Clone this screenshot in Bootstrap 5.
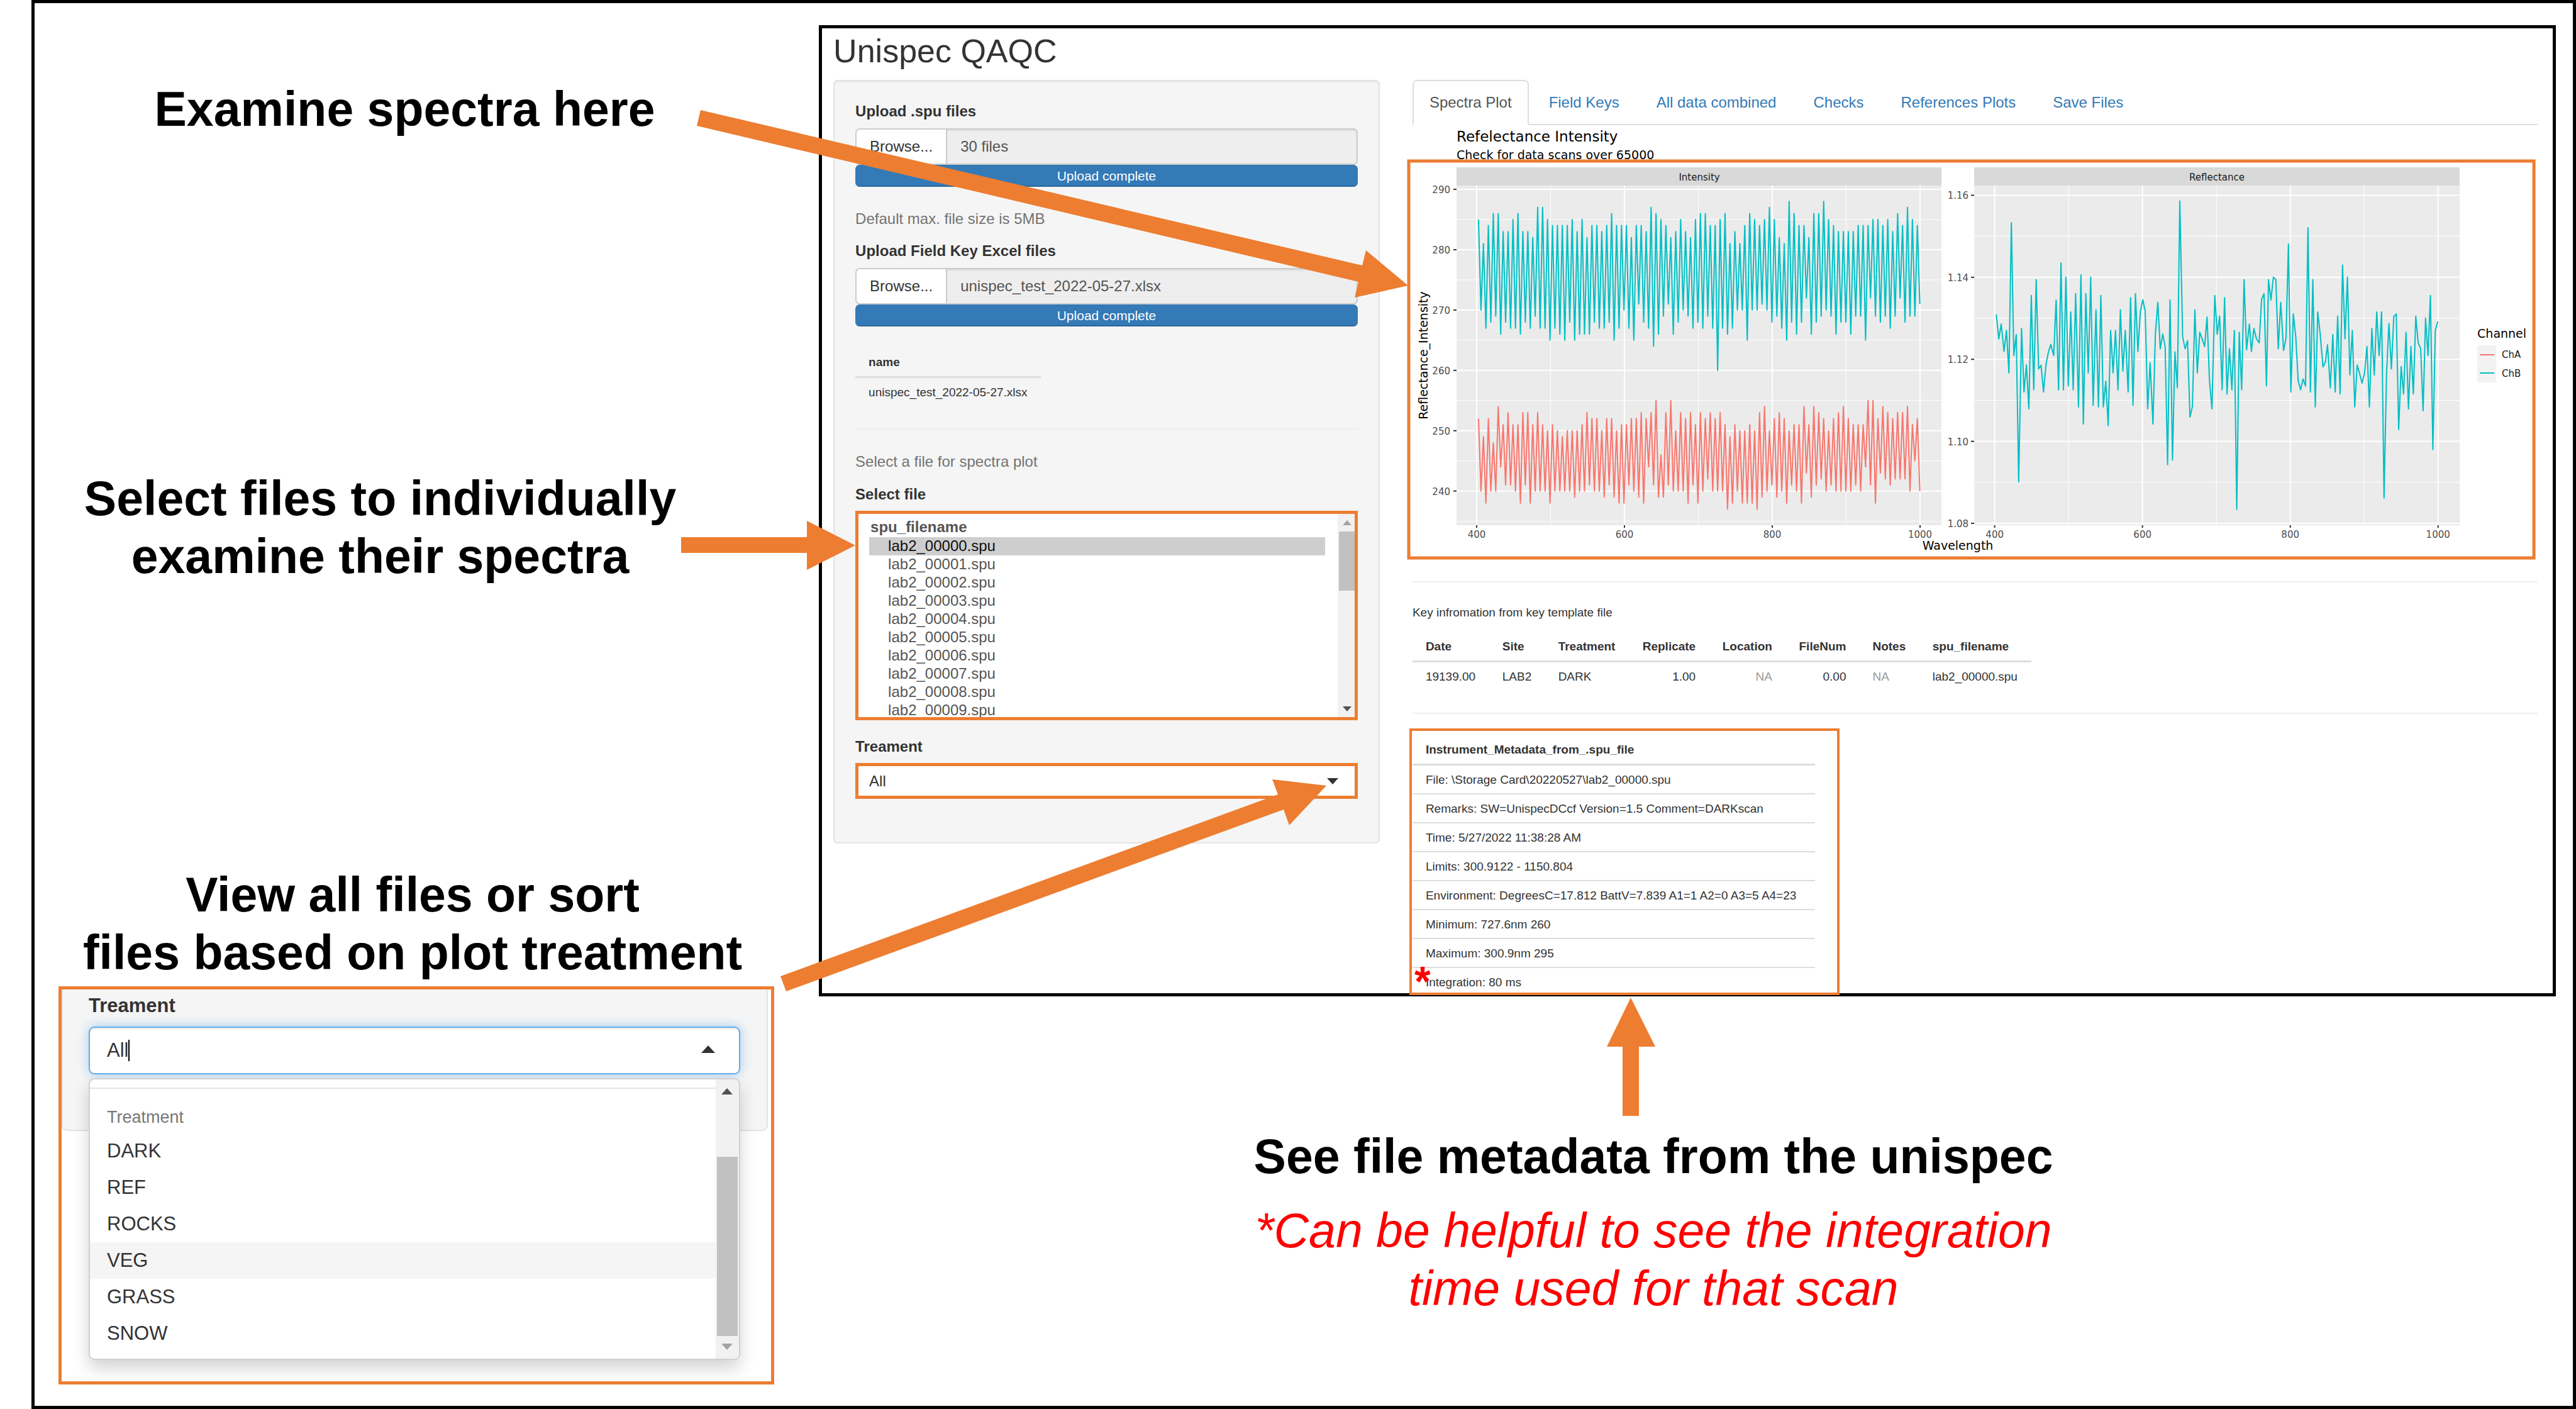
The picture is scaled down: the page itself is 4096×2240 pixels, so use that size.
<!DOCTYPE html>
<html lang="en">
<head>
<meta charset="utf-8">
<meta name="viewport" content="width=device-width, initial-scale=1">
<title>Unispec QAQC guide</title>
<link href="https://cdn.jsdelivr.net/npm/bootstrap@5.3.0/dist/css/bootstrap.min.css" rel="stylesheet">
<style>
  :root { --accent: #ed7d31; --ink: #333; --app: 24px; }
  body { font-family: "Liberation Sans", Arial, sans-serif; font-size: var(--app); line-height: 34px; color: var(--ink); background: #fff; }
  .slide { margin-left: 50px; border: 5px solid #000; min-height: 100vh; }
  .guide-col { flex: 0 0 30.9%; min-width: 0; padding-top: 122px; }
  .guide-note { font-size: 77px; line-height: 92px; font-weight: 700; color: #000; text-align: center; margin: 0; }
  .note-examine { padding-right: 70px; }
  .note-select { margin-top: 527px; padding-right: 148px; }
  .note-view { margin-top: 446px; padding-right: 45px; }
  .note-file { margin-top: 208px; padding-right: 108px; }
  .note-help { margin-top: 26px; padding-right: 108px; font-weight: 400; font-style: italic; color: #f00; }
  .arrows { top: 0; left: 0; width: 100%; pointer-events: none; z-index: 5; fill: var(--accent); }

  /* application window */
  .main-col { padding: 35px 27px 0 0; min-width: 0; }
  .app-window { border: 5px solid #000; padding: 7px 24px 0 18px; background: #fff; }
  .app-title { font-size: 52px; line-height: 58px; font-weight: 400; margin: 0 0 17px; }
  .app-body { gap: 52px; }
  .side-well { flex: 0 0 32.06%; background: #f5f5f5; border: 2px solid #e3e3e3; border-radius: 7px; padding: 31px 33px 69px; box-shadow: inset 0 2px 2px rgba(0,0,0,.05); }
  .side-well label { display: block; font-weight: 700; margin-bottom: 9px; }
  .side-well .key-label { margin-top: 17px; }
  .side-well .treat-label { margin-top: 25px; }
  .file-group { height: 58px; margin-top: 10px; }
  .file-group .btn { background: #fff; color: var(--ink); border: 2px solid #ccc; border-right: 0; border-radius: 7px 0 0 7px; font-size: var(--app); padding: 0 21px; }
  .file-group .form-control { background: #eee; color: #555; border: 2px solid #ccc; border-radius: 0 7px 7px 0; font-size: var(--app); padding: 0 21px; box-shadow: inset 0 2px 2px rgba(0,0,0,.075); margin-left: 0 !important; }
  .progress { height: 35px; border-radius: 7px; margin-bottom: 34px; }
  .progress-bar { background: #337ab7; font-size: 21px; box-shadow: inset 0 -2px 0 rgba(0,0,0,.15); }
  .help-text { color: #737373; margin-bottom: 18px; }
  .rule { height: 2px; margin: 34px 0; background: #eee; border: 0; opacity: 1; }
  .data-table { font-size: 19px; line-height: 26px; color: var(--ink); margin: 0; --bs-table-bg: transparent; }
  .data-table th, .data-table td { padding: 10px 21px; border: 0; color: var(--ink); white-space: nowrap; }
  .data-table th { padding-bottom: 9px; border-bottom: 3px solid #ddd; }
  .data-table td.na { color: #999; }
  .file-list { border: 5px solid var(--accent); height: 333px; padding: 7px 47px 0 17px; width: 100%; color: #555; background: #fff; font-size: var(--app); overflow: hidden; border-radius: 0; display: block; scrollbar-width: none; }
  .file-list optgroup { line-height: 35px; font-weight: 700; padding: 0; }
  .file-list option { height: 29px; min-height: 29px; line-height: 29px; padding: 0 0 0 30px; font-weight: 400; }
  .list-scroll { top: 5px; right: 5px; bottom: 5px; width: 27px; background: #f1f1f1; }
  .list-scroll svg, .menu-scroll svg { width: 100%; display: block; }
  .pick { height: 57px; border: 5px solid var(--accent); border-radius: 0; background: #fff; font-size: var(--app); line-height: 34px; padding: 0 17px; color: var(--ink); }
  .pick-caret { right: 31px; top: 24px; width: 18px; height: 10px; }

  /* tabs and plot */
  .view-col { min-width: 0; }
  .nav-tabs { border-bottom: 2px solid #ddd; gap: 5px; }
  .nav-tabs .nav-link { color: #337ab7; border: 2px solid transparent; border-radius: 7px 7px 0 0; padding: 17px 25px; line-height: 34px; margin-bottom: -2px; }
  .nav-tabs .nav-link.active { color: #555; border-color: #ddd #ddd #fff; }
  .plot { display: block; width: 100%; height: auto; overflow: visible; font-family: "DejaVu Sans", sans-serif; }
  .plot .sm { font-size: 15px; fill: #4d4d4d; }
  .plot .dark { fill: #1a1a1a; }
  .plot .md { font-size: 19px; fill: #000; }
  .plot .lg { font-size: 23px; fill: #000; }
  .plot polyline { fill: none; stroke-width: 2; stroke-linejoin: round; vector-effect: non-scaling-stroke; }
  .key-note { font-size: 19px; line-height: 28px; margin: 0 0 17px; }
  .key-table { width: 55%; }
  .meta-box { display: inline-block; vertical-align: top; position: relative; border: 4px solid var(--accent); margin: -11px 0 -3px -5px; padding: 7px 35px 0 1px; background: #fff; }
  .meta-table { width: 640px; }
  .meta-table td { padding: 10px 21px 8px; border-bottom: 2px solid #ddd; }
  .meta-table tr:last-child td { border-bottom: 0; padding-bottom: 3px; position: relative; }
  .star { left: 3px; top: -12px; font-size: 66px; line-height: 66px; font-weight: 700; color: #f00; }

  /* enlarged drop-down */
  .zoom-box { margin: 8px 71px 33px 38px; border: 5px solid var(--accent); min-height: 633px; padding-right: 5px; font-size: 31px; line-height: 44px; }
  .zoom-well { background: #f5f5f5; border: 2px solid #e3e3e3; border-top: 0; border-radius: 0 0 9px 9px; padding: 4px 42px 88px 41px; }
  .zoom-well label { font-weight: 700; display: block; margin-bottom: 11px; }
  .zoom-input { height: 76px; border: 2px solid #66afe9; border-radius: 9px; font-size: 31px; line-height: 44px; padding: 0 27px; color: var(--ink); box-shadow: inset 0 2px 2px rgba(0,0,0,.075), 0 0 18px rgba(102,175,233,.6); }
  .text-cursor { left: 63px; top: 21px; width: 2px; height: 34px; background: #000; }
  .zoom-caret { right: 40px; top: 30px; width: 22px; height: 12px; }
  .zoom-menu { top: 82px; left: 0; width: 100%; border: 2px solid #d0d0d0; border-radius: 9px; padding: 13px 36px 11px 0; font-size: 31px; line-height: 44px; box-shadow: 0 13px 26px rgba(0,0,0,.175); overflow: hidden; }
  .zoom-menu .menu-head { font-size: 27px; line-height: 38px; color: #777; padding: 26px 27px 6px; border-top: 2px solid #e5e5e5; }
  .zoom-menu .dropdown-item { padding: 7px 27px; color: var(--ink); }
  .zoom-menu .dropdown-item.hovered { background: #f5f5f5; }
  .menu-scroll { top: 0; right: 0; bottom: 0; width: 37px; background: #f1f1f1; }
</style>
<script src="https://cdn.jsdelivr.net/npm/bootstrap@5.3.0/dist/js/bootstrap.bundle.min.js"></script>
</head>
<body class="position-relative">
<main class="slide d-flex">
  <section class="guide-col">
    <p class="guide-note note-examine">Examine spectra here</p>
    <p class="guide-note note-select">Select files to individually<br>examine their spectra</p>
    <p class="guide-note note-view">View all files or sort<br>files based on plot treatment</p>
    <div class="zoom-box">
      <div class="zoom-well">
        <label for="zoomTreatment">Treament</label>
        <div class="position-relative">
          <input id="zoomTreatment" class="form-control zoom-input" type="text" value="All">
          <span class="position-absolute text-cursor"></span>
          <svg class="position-absolute zoom-caret" viewBox="0 0 22 12"><path d="M0 12 11 0 22 12Z" fill="#333"/></svg>
          <ul class="dropdown-menu show zoom-menu">
            <li class="menu-head">Treatment</li>
            <li><button class="dropdown-item" type="button">DARK</button></li>
            <li><button class="dropdown-item" type="button">REF</button></li>
            <li><button class="dropdown-item" type="button">ROCKS</button></li>
            <li><button class="dropdown-item hovered" type="button">VEG</button></li>
            <li><button class="dropdown-item" type="button">GRASS</button></li>
            <li><button class="dropdown-item" type="button">SNOW</button></li>
            <li class="position-absolute menu-scroll" aria-hidden="true">
              <svg viewBox="0 0 37 444"><path d="M9 24 18 14 27 24Z" fill="#505050"/><path d="M2 123H35V408H2Z" fill="#c1c1c1"/><path d="M9 420 18 430 27 420Z" fill="#a3a3a3"/></svg>
            </li>
          </ul>
        </div>
      </div>
    </div>
  </section>

  <section class="main-col flex-grow-1">
    <div class="app-window">
      <h1 class="app-title">Unispec QAQC</h1>
      <div class="app-body d-flex align-items-start">
        <form class="side-well">
          <label for="spuFiles" class="mb-0">Upload .spu files</label>
          <div class="input-group file-group">
            <button class="btn" type="button">Browse...</button>
            <input id="spuFiles" class="form-control" type="text" value="30 files" readonly>
          </div>
          <div class="progress"><div class="progress-bar w-100">Upload complete</div></div>
          <p class="help-text mb-0">Default max. file size is 5MB</p>
          <label for="keyFiles" class="key-label mb-0">Upload Field Key Excel files</label>
          <div class="input-group file-group">
            <button class="btn" type="button">Browse...</button>
            <input id="keyFiles" class="form-control" type="text" value="unispec_test_2022-05-27.xlsx" readonly>
          </div>
          <div class="progress"><div class="progress-bar w-100">Upload complete</div></div>
          <table class="table data-table w-auto">
            <thead><tr><th>name</th></tr></thead>
            <tbody><tr><td>unispec_test_2022-05-27.xlsx</td></tr></tbody>
          </table>
          <hr class="rule">
          <p class="help-text">Select a file for spectra plot</p>
          <label for="fileList">Select file</label>
          <div class="position-relative">
            <select id="fileList" class="file-list" size="11">
              <optgroup label="spu_filename">
                <option selected>lab2_00000.spu</option>
                <option>lab2_00001.spu</option>
                <option>lab2_00002.spu</option>
                <option>lab2_00003.spu</option>
                <option>lab2_00004.spu</option>
                <option>lab2_00005.spu</option>
                <option>lab2_00006.spu</option>
                <option>lab2_00007.spu</option>
                <option>lab2_00008.spu</option>
                <option>lab2_00009.spu</option>
              </optgroup>
            </select>
            <div class="position-absolute list-scroll" aria-hidden="true">
              <svg viewBox="0 0 27 323"><path d="M8 18 15 10 22 18Z" fill="#a3a3a3"/><path d="M2 28H27V122H2Z" fill="#c1c1c1"/><path d="M8 306 15 314 22 306Z" fill="#505050"/></svg>
            </div>
          </div>
          <label for="treatment" class="treat-label">Treament</label>
          <div class="position-relative">
            <select id="treatment" class="form-select pick"><option>All</option><option>DARK</option><option>REF</option><option>ROCKS</option><option>VEG</option><option>GRASS</option><option>SNOW</option></select>
            <svg class="position-absolute pick-caret" viewBox="0 0 18 10"><path d="M0 0H18L9 10Z" fill="#333"/></svg>
          </div>
        </form>

        <div class="view-col flex-grow-1">
          <ul class="nav nav-tabs">
            <li class="nav-item"><a class="nav-link active" href="#">Spectra Plot</a></li>
            <li class="nav-item"><a class="nav-link" href="#">Field Keys</a></li>
            <li class="nav-item"><a class="nav-link" href="#">All data combined</a></li>
            <li class="nav-item"><a class="nav-link" href="#">Checks</a></li>
            <li class="nav-item"><a class="nav-link" href="#">References Plots</a></li>
            <li class="nav-item"><a class="nav-link" href="#">Save Files</a></li>
          </ul>
          <svg class="plot" viewBox="2246 199 1789 691">
            <text class="lg" x="2316" y="225">Refelectance Intensity</text>
            <text class="md" x="2316" y="253">Check for data scans over 65000</text>
            <path d="M2316 266H3087V295H2316ZM3139 266H3911V295H3139Z" fill="#d9d9d9"/>
            <path d="M2316 295H3087V835H2316ZM3139 295H3911V835H3139Z" fill="#ebebeb"/>
            <g id="grid"></g>
            <text class="sm dark" x="2702" y="287" text-anchor="middle">Intensity</text>
            <text class="sm dark" x="3525" y="287" text-anchor="middle">Reflectance</text>
            <polyline id="chA" stroke="#f8766d"/>
            <polyline id="chB" stroke="#00bfc4"/>
            <g transform="translate(3070.7 111.7) scale(.6469 .5044)">
              <polyline stroke="#00bfc4" points="160,769 166,847 172,800 179,886 185,820 191,954 197,481 203,899 209,833 215,1297 222,814 228,1014 234,929 240,1067 246,710 252,1007 258,660 264,941 270,930 276,1014 282,929 288,888 294,864 301,899 307,724 313,1007 319,607 325,1007 331,652 337,995 343,762 349,1007 355,704 362,1061 368,645 374,1115 380,704 386,954 392,652 398,1056 405,755 411,1061 417,710 423,1061 429,980 435,1120 441,820 447,954 453,820 459,1007 465,755 471,948 477,820 484,1014 490,717 496,1056 502,704 508,886 514,762 520,723 526,760 532,1067 538,922 545,1115 551,830 557,731 563,878 569,831 575,871 581,1243 587,724 593,1228 599,888 605,1001 611,412 618,840 624,878 630,852 636,1093 642,1060 648,755 654,954 660,826 666,847 672,871 678,778 684,980 690,1067 697,710 703,832 709,775 715,1007 721,717 727,1020 733,878 739,1007 745,820 751,1384 757,826 763,1007 769,660 775,881 782,800 787,886 793,814 799,845 806,859 812,723 818,704 824,995 829,660 835,724 841,652 847,660 853,878 859,731 866,883 872,845 878,548 884,1014 890,768 896,840 902,980 908,1007 914,973 920,995 926,496 932,1014 938,660 944,1061 950,762 956,830 963,935 969,918 974,865 981,1001 987,833 993,1014 999,775 1005,1020 1011,614 1017,846 1023,652 1029,960 1035,820 1041,1061 1047,929 1053,956 1059,986 1065,955 1071,871 1077,1061 1083,814 1089,960 1095,762 1101,899 1107,762 1113,1348 1119,960 1125,798 1131,941 1137,776 1143,768 1149,1132 1155,934 1161,1020 1167,826 1173,1067 1179,871 1185,1020 1191,775 1197,860 1203,877 1209,1073 1215,781 1221,899 1227,710 1233,1195 1239,820 1245,792"/>
            </g>
            <text class="md" x="3113" y="874" text-anchor="middle">Wavelength</text>
            <text class="md" transform="translate(2270 565) rotate(-90)" text-anchor="middle">Reflectance_Intensity</text>
            <text class="md" x="3939" y="537">Channel</text>
            <path d="M3939 549H3969V608H3939Z" fill="#f2f2f2"/>
            <path d="M3943 564H3966" stroke="#f8766d" stroke-width="2"/>
            <path d="M3943 593H3966" stroke="#00bfc4" stroke-width="2"/>
            <text class="sm dark" x="3978" y="569">ChA</text>
            <text class="sm dark" x="3978" y="599">ChB</text>
            <rect x="2240" y="256" width="1789" height="631" fill="none" stroke="#ed7d31" stroke-width="5"/>
          </svg>
          <hr class="rule">
          <p class="key-note">Key infromation from key template file</p>
          <table class="table data-table key-table">
            <thead><tr><th>Date</th><th>Site</th><th>Treatment</th><th class="text-end">Replicate</th><th class="text-end">Location</th><th class="text-end">FileNum</th><th>Notes</th><th>spu_filename</th></tr></thead>
            <tbody><tr><td>19139.00</td><td>LAB2</td><td>DARK</td><td class="text-end">1.00</td><td class="text-end na">NA</td><td class="text-end">0.00</td><td class="na">NA</td><td>lab2_00000.spu</td></tr></tbody>
          </table>
          <hr class="rule">
          <div class="meta-box">
            <table class="table data-table meta-table">
              <thead><tr><th>Instrument_Metadata_from_.spu_file</th></tr></thead>
              <tbody>
                <tr><td>File: \Storage Card\20220527\lab2_00000.spu</td></tr>
                <tr><td>Remarks: SW=UnispecDCcf Version=1.5 Comment=DARKscan</td></tr>
                <tr><td>Time: 5/27/2022 11:38:28 AM</td></tr>
                <tr><td>Limits: 300.9122 - 1150.804</td></tr>
                <tr><td>Environment: DegreesC=17.812 BattV=7.839 A1=1 A2=0 A3=5 A4=23</td></tr>
                <tr><td>Minimum: 727.6nm 260</td></tr>
                <tr><td>Maximum: 300.9nm 295</td></tr>
                <tr><td>Integration: 80 ms<span class="position-absolute star">*</span></td></tr>
              </tbody>
            </table>
          </div>
        </div>
      </div>
    </div>
    <p class="guide-note note-file">See file metadata from the unispec</p>
    <p class="guide-note note-help">*Can be helpful to see the integration<br>time used for that scan</p>
  </section>
</main>

<svg class="position-absolute arrows" viewBox="0 0 4096 2240" aria-hidden="true">
  <path d="M1114 175 2166 422 2172 398 2239 454 2154 473 2160 448 1108 200Z"/>
  <path d="M1083 854H1283V828L1360 867 1283 906V879H1083Z"/>
  <path d="M1241 1552 2032 1263 2023 1239 2109 1249 2050 1312 2041 1287 1250 1576Z"/>
  <path d="M2593 1586 2632 1664H2606V1774H2580V1664H2555Z"/>
</svg>

<script>
  // Intensity series: local maxima and minima alternate along the wavelength axis
  const bHi = [285,281,284,286,286,283,283,285,286,283,283,282,287,287,285,284,284,284,284,285,283,285,282,284,284,283,284,286,284,284,284,282,284,284,283,287,286,285,284,282,283,285,283,282,285,286,286,284,284,285,286,281,283,281,284,286,285,284,285,287,285,282,281,288,286,284,284,282,286,286,288,285,284,283,283,283,283,284,284,284,285,285,284,285,283,286,284,287,285,284];
  const bLo = [270,267,268,269,266,268,267,267,266,268,267,269,267,267,265,267,266,265,268,265,266,266,266,268,267,267,268,265,267,270,267,265,271,268,267,264,266,269,271,266,268,270,269,267,268,267,269,267,260,267,266,267,270,270,265,270,270,271,270,268,269,267,265,268,266,268,272,266,268,269,270,269,266,268,268,266,269,269,265,272,269,268,269,267,269,272,268,269,269,271];
  const aHi = [252,249,252,248,254,251,253,251,251,253,253,251,253,251,250,251,250,249,250,250,250,251,253,252,252,250,252,252,250,251,251,252,252,253,252,253,255,246,253,255,250,253,252,253,251,253,252,253,252,253,251,249,251,250,250,251,250,253,254,250,252,253,252,250,251,251,254,251,254,253,252,250,252,253,254,252,251,251,251,255,255,252,254,253,252,253,253,254,251,252];
  const aLo = [240,238,240,240,244,241,241,240,238,241,238,240,240,240,238,240,240,240,240,239,240,240,241,240,240,239,241,239,238,238,241,240,239,238,244,241,239,239,241,240,240,240,238,241,238,240,242,240,240,240,237,238,240,238,238,238,237,239,240,241,239,240,238,241,240,238,243,239,241,242,240,241,240,240,240,240,241,240,244,241,238,243,242,241,242,242,242,240,245,240];
  const yOf = v => 301 + (290 - v) * 9.593;
  const line = (hi, lo) => hi.map((h, i) => {
    const x = 2350.9 + i * 7.84;
    return `${x},${yOf(h)} ${x + 3.92},${yOf(lo[i])}`;
  }).join(' ');
  document.getElementById('chA').setAttribute('points', line(aHi, aLo));
  document.getElementById('chB').setAttribute('points', line(bHi, bLo));

  let g = '';
  const rule = (d, w, c) => { g += `<path d="${d}" stroke="${c || '#fff'}" stroke-width="${w}"/>`; };
  const label = (x, y, t, a) => { g += `<text class="sm" x="${x}" y="${y}" text-anchor="${a}">${t}</text>`; };
  for (let v = 235; v < 290; v += 10) rule(`M2316 ${yOf(v)}H3087`, 1);
  for (let v = 240; v <= 290; v += 10) {
    rule(`M2316 ${yOf(v)}H3087`, 2);
    rule(`M2311 ${yOf(v)}h5`, 2, '#333');
    label(2306, yOf(v) + 6, v, 'end');
  }
  for (let i = 0; i < 5; i++) {
    const y = 310.4 + i * 130.4;
    if (i < 4) rule(`M3139 ${y + 65.2}H3911`, 1);
    rule(`M3139 ${y}H3911`, 2);
    rule(`M3134 ${y}h5`, 2, '#333');
    label(3130, y + 6, (1.16 - i * 0.02).toFixed(2), 'end');
  }
  for (const x0 of [2348, 3171.6]) {
    for (let i = 0; i < 4; i++) {
      const x = x0 + i * 235;
      if (i < 3) rule(`M${x + 117.5} 295V835`, 1);
      rule(`M${x} 295V835`, 2);
      rule(`M${x} 835v4`, 2, '#333');
      label(x, 855, 400 + i * 200, 'middle');
    }
  }
  document.getElementById('grid').innerHTML = g;
</script>
</body>
</html>
